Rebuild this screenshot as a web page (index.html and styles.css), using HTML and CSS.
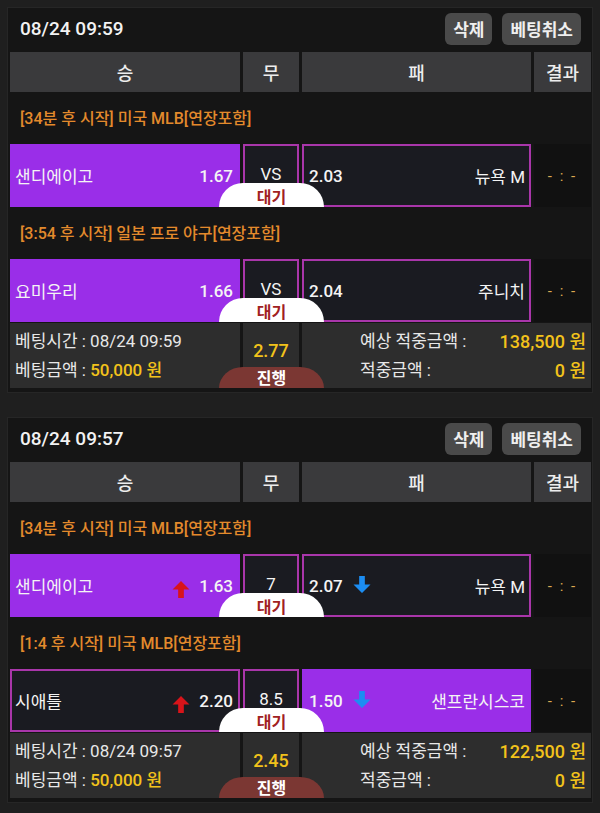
FILE: index.html
```html
<!DOCTYPE html>
<html lang="ko">
<head>
<meta charset="utf-8">
<title>베팅내역</title>
<link rel="stylesheet" href="styles.css">
</head>
<body>
<div class="page">

  <section class="card">
    <header class="card-head">
      <span class="date">08/24 09:59</span>
      <div class="actions">
        <button class="btn">삭제</button>
        <button class="btn">베팅취소</button>
      </div>
    </header>
    <div class="grid cols">
      <div class="col-h">승</div>
      <div class="col-h">무</div>
      <div class="col-h">패</div>
      <div class="col-h">결과</div>
    </div>

    <div class="league">[34분 후 시작] 미국 MLB[연장포함]</div>
    <div class="grid match">
      <div class="pick home sel"><span class="team">샌디에이고</span><span class="odds">1.67</span></div>
      <div class="pick draw"><span class="draw-val">VS</span><span class="badge wait">대기</span></div>
      <div class="pick away"><span class="odds">2.03</span><span class="team">뉴욕 M</span></div>
      <div class="result">- : -</div>
    </div>

    <div class="league">[3:54 후 시작] 일본 프로 야구[연장포함]</div>
    <div class="grid match">
      <div class="pick home sel"><span class="team">요미우리</span><span class="odds">1.66</span></div>
      <div class="pick draw"><span class="draw-val">VS</span><span class="badge wait">대기</span></div>
      <div class="pick away"><span class="odds">2.04</span><span class="team">주니치</span></div>
      <div class="result">- : -</div>
    </div>

    <div class="grid summary">
      <div class="sum sum-left">
        <div>베팅시간 : 08/24 09:59</div>
        <div>베팅금액 : <span class="money">50,000 원</span></div>
      </div>
      <div class="sum sum-mid"><span class="total">2.77</span><span class="badge run">진행</span></div>
      <div class="sum sum-right">
        <span>예상 적중금액 :</span><span class="money val">138,500 원</span>
        <span>적중금액 :</span><span class="money val">0 원</span>
      </div>
    </div>
  </section>

  <section class="card">
    <header class="card-head">
      <span class="date">08/24 09:57</span>
      <div class="actions">
        <button class="btn">삭제</button>
        <button class="btn">베팅취소</button>
      </div>
    </header>
    <div class="grid cols">
      <div class="col-h">승</div>
      <div class="col-h">무</div>
      <div class="col-h">패</div>
      <div class="col-h">결과</div>
    </div>

    <div class="league">[34분 후 시작] 미국 MLB[연장포함]</div>
    <div class="grid match">
      <div class="pick home sel"><span class="team">샌디에이고</span>
        <svg class="arrow" viewBox="0 0 18 18"><polygon class="up" points="9,0 18,9 12,9 12,18 6,18 6,9 0,9"/></svg>
        <span class="odds">1.63</span></div>
      <div class="pick draw"><span class="draw-val">7</span><span class="badge wait">대기</span></div>
      <div class="pick away"><span class="odds">2.07</span>
        <svg class="arrow arrow-r" viewBox="0 0 18 18"><polygon class="down" points="6,0 12,0 12,9 18,9 9,18 0,9 6,9"/></svg>
        <span class="team">뉴욕 M</span></div>
      <div class="result">- : -</div>
    </div>

    <div class="league">[1:4 후 시작] 미국 MLB[연장포함]</div>
    <div class="grid match">
      <div class="pick home"><span class="team">시애틀</span>
        <svg class="arrow" viewBox="0 0 18 18"><polygon class="up" points="9,0 18,9 12,9 12,18 6,18 6,9 0,9"/></svg>
        <span class="odds">2.20</span></div>
      <div class="pick draw"><span class="draw-val">8.5</span><span class="badge wait">대기</span></div>
      <div class="pick away sel"><span class="odds">1.50</span>
        <svg class="arrow arrow-r" viewBox="0 0 18 18"><polygon class="down" points="6,0 12,0 12,9 18,9 9,18 0,9 6,9"/></svg>
        <span class="team">샌프란시스코</span></div>
      <div class="result">- : -</div>
    </div>

    <div class="grid summary">
      <div class="sum sum-left">
        <div>베팅시간 : 08/24 09:57</div>
        <div>베팅금액 : <span class="money">50,000 원</span></div>
      </div>
      <div class="sum sum-mid"><span class="total">2.45</span><span class="badge run">진행</span></div>
      <div class="sum sum-right">
        <span>예상 적중금액 :</span><span class="money val">122,500 원</span>
        <span>적중금액 :</span><span class="money val">0 원</span>
      </div>
    </div>
  </section>

</div>
</body>
</html>
```
FILE: styles.css
```css
* { box-sizing: border-box; }

body {
  margin: 0;
  background: #1f1f1f;
  color: #ececec;
  font-family: Roboto, "Noto Sans CJK KR", sans-serif;
}

.page {
  padding: 7px 7px 0;
  display: flex;
  flex-direction: column;
  gap: 24px;
}

.card {
  background: #151515;
  border: 1px solid #262626;
  padding: 0 1px 4px 2px;
}

.card-head {
  height: 44px;
  padding: 0 10px 3px;
  display: flex;
  align-items: center;
  justify-content: space-between;
}

.date {
  font-size: 19px;
  font-weight: 500;
  color: #f2f2f2;
}

.actions {
  display: flex;
  gap: 10px;
}

.btn {
  height: 32px;
  padding: 0 8px;
  border: 0;
  border-radius: 6px;
  background: #4a4a4a;
  color: #efefef;
  font-family: Roboto, "Noto Sans CJK KR", sans-serif;
  font-size: 17px;
  font-weight: 700;
}

.grid {
  display: grid;
  grid-template-columns: 230px 56px 229px 57px;
  column-gap: 3px;
}

.cols { height: 40px; }

.col-h {
  background: #3a3a3c;
  display: flex;
  align-items: center;
  justify-content: center;
  font-size: 18px;
  font-weight: 500;
  color: #ededed;
}

.league {
  height: 52px;
  padding: 0 10px 2px;
  display: flex;
  align-items: center;
  color: #e38a2c;
  font-size: 16px;
  font-weight: 500;
}

.match { height: 63px; }

.pick {
  border: 2px solid #a936aa;
  background: #1a1b21;
  display: flex;
  align-items: center;
  font-size: 17px;
  color: #f4f4f4;
}

.pick.sel {
  background: #9a2ee8;
  border-color: #9a2ee8;
}

.home { padding: 0 5px 0 3px; }
.home .team { margin-right: auto; }

.away { padding: 0 4px 0 5px; }
.away .team { margin-left: auto; }

.odds {
  font-size: 17px;
  font-weight: 500;
}

.arrow {
  width: 18px;
  height: 17px;
  margin: 7px 9px 0 0;
}

.arrow-r { margin: 0 0 2px 10px; }

.up { fill: #d8141a; }
.down { fill: #1c8df2; }

.draw {
  position: relative;
  justify-content: center;
  padding-bottom: 3px;
  font-size: 17px;
}

.badge {
  position: absolute;
  left: calc(50% - 52px);
  width: 105px;
  display: flex;
  align-items: center;
  justify-content: center;
  font-size: 16px;
  font-weight: 700;
  z-index: 1;
}

.badge.wait {
  bottom: -2px;
  height: 24px;
  padding-top: 2px;
  background: #ffffff;
  color: #a1211f;
  border-radius: 24px 24px 0 0 / 24px 24px 0 0;
}

.badge.run {
  bottom: 0;
  height: 21px;
  padding-top: 1px;
  background: #7b3733;
  color: #ffffff;
  border-radius: 24px 24px 0 0 / 21px 21px 0 0;
}

.result {
  background: #111111;
  display: flex;
  align-items: center;
  justify-content: center;
  color: #dcaa52;
  font-size: 15px;
  letter-spacing: 2px;
}

.summary {
  height: 65px;
  margin-top: 1px;
}

.sum {
  background: #2d2d2d;
  font-size: 17px;
  color: #e8e8e8;
  line-height: 29px;
}

.sum-left {
  padding: 0 5px;
  display: flex;
  flex-direction: column;
  justify-content: center;
}

.money {
  color: #f2c21b;
  font-weight: 500;
}

.sum-mid {
  position: relative;
  display: flex;
  justify-content: center;
  padding-top: 13px;
}

.total {
  color: #f2c21b;
  font-size: 18px;
  font-weight: 500;
}

.sum-right {
  grid-column: 3 / 5;
  display: grid;
  grid-template-columns: auto 1fr;
  align-content: center;
  padding: 0 5px 0 58px;
}

.val {
  text-align: right;
  font-size: 18px;
}
```
